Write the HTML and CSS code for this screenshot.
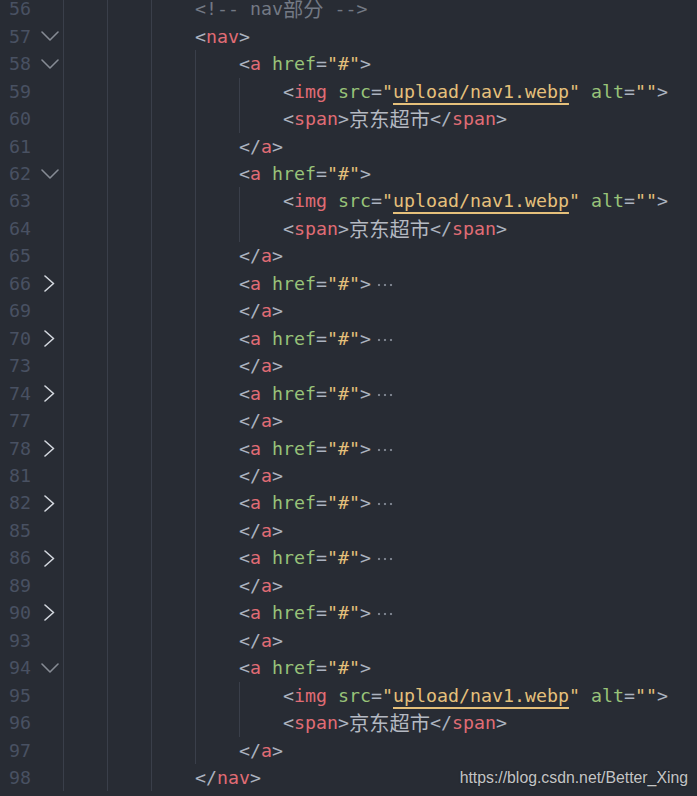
FILE: index.html
```html
<!DOCTYPE html>
<html lang="zh">
<head>
<meta charset="utf-8">
<title>nav</title>
<link rel="stylesheet" href="styles.css">
</head>
<body>
<div class="editor">
  <div class="lines">
    <div class="row first"><span class="ln">56</span><span class="fold"></span><div class="code"><i class="ind"></i><i class="ind"></i><i class="ind"></i><span class="txt c-com">&lt;!-- nav<span class="cjk">部分</span> --&gt;</span></div></div>
    <div class="row"><span class="ln">57</span><span class="fold"><svg class="chev-d" width="18" height="10" viewBox="0 0 18 10"><polyline points="1,1 9,9 17,1"/></svg></span><div class="code"><i class="ind"></i><i class="ind"></i><i class="ind"></i><span class="txt"><b class="p">&lt;</b><b class="t">nav</b><b class="p">&gt;</b></span></div></div>
    <div class="row"><span class="ln">58</span><span class="fold"><svg class="chev-d" width="18" height="10" viewBox="0 0 18 10"><polyline points="1,1 9,9 17,1"/></svg></span><div class="code"><i class="ind"></i><i class="ind"></i><i class="ind"></i><i class="ind"></i><span class="txt"><b class="p">&lt;</b><b class="t">a</b> <b class="a">href</b><b class="p">=</b><b class="s">"#"</b><b class="p">&gt;</b></span></div></div>
    <div class="row"><span class="ln">59</span><span class="fold"></span><div class="code"><i class="ind"></i><i class="ind"></i><i class="ind"></i><i class="ind"></i><i class="ind"></i><span class="txt"><b class="p">&lt;</b><b class="t">img</b> <b class="a">src</b><b class="p">=</b><b class="s">"<u class="link">upload/nav1.webp</u>"</b> <b class="a">alt</b><b class="p">=</b><b class="s">""</b><b class="p">&gt;</b></span></div></div>
    <div class="row"><span class="ln">60</span><span class="fold"></span><div class="code"><i class="ind"></i><i class="ind"></i><i class="ind"></i><i class="ind"></i><i class="ind"></i><span class="txt"><b class="p">&lt;</b><b class="t">span</b><b class="p">&gt;</b><span class="cjk">京东超市</span><b class="p">&lt;/</b><b class="t">span</b><b class="p">&gt;</b></span></div></div>
    <div class="row"><span class="ln">61</span><span class="fold"></span><div class="code"><i class="ind"></i><i class="ind"></i><i class="ind"></i><i class="ind"></i><span class="txt"><b class="p">&lt;/</b><b class="t">a</b><b class="p">&gt;</b></span></div></div>
    <div class="row"><span class="ln">62</span><span class="fold"><svg class="chev-d" width="18" height="10" viewBox="0 0 18 10"><polyline points="1,1 9,9 17,1"/></svg></span><div class="code"><i class="ind"></i><i class="ind"></i><i class="ind"></i><i class="ind"></i><span class="txt"><b class="p">&lt;</b><b class="t">a</b> <b class="a">href</b><b class="p">=</b><b class="s">"#"</b><b class="p">&gt;</b></span></div></div>
    <div class="row"><span class="ln">63</span><span class="fold"></span><div class="code"><i class="ind"></i><i class="ind"></i><i class="ind"></i><i class="ind"></i><i class="ind"></i><span class="txt"><b class="p">&lt;</b><b class="t">img</b> <b class="a">src</b><b class="p">=</b><b class="s">"<u class="link">upload/nav1.webp</u>"</b> <b class="a">alt</b><b class="p">=</b><b class="s">""</b><b class="p">&gt;</b></span></div></div>
    <div class="row"><span class="ln">64</span><span class="fold"></span><div class="code"><i class="ind"></i><i class="ind"></i><i class="ind"></i><i class="ind"></i><i class="ind"></i><span class="txt"><b class="p">&lt;</b><b class="t">span</b><b class="p">&gt;</b><span class="cjk">京东超市</span><b class="p">&lt;/</b><b class="t">span</b><b class="p">&gt;</b></span></div></div>
    <div class="row"><span class="ln">65</span><span class="fold"></span><div class="code"><i class="ind"></i><i class="ind"></i><i class="ind"></i><i class="ind"></i><span class="txt"><b class="p">&lt;/</b><b class="t">a</b><b class="p">&gt;</b></span></div></div>
    <div class="row"><span class="ln">66</span><span class="fold"><svg class="chev-r" width="11" height="17" viewBox="0 0 11 17"><polyline points="1,1 9.5,8.5 1,16"/></svg></span><div class="code"><i class="ind"></i><i class="ind"></i><i class="ind"></i><i class="ind"></i><span class="txt"><b class="p">&lt;</b><b class="t">a</b> <b class="a">href</b><b class="p">=</b><b class="s">"#"</b><b class="p">&gt;</b><span class="more"></span></span></div></div>
    <div class="row"><span class="ln">69</span><span class="fold"></span><div class="code"><i class="ind"></i><i class="ind"></i><i class="ind"></i><i class="ind"></i><span class="txt"><b class="p">&lt;/</b><b class="t">a</b><b class="p">&gt;</b></span></div></div>
    <div class="row"><span class="ln">70</span><span class="fold"><svg class="chev-r" width="11" height="17" viewBox="0 0 11 17"><polyline points="1,1 9.5,8.5 1,16"/></svg></span><div class="code"><i class="ind"></i><i class="ind"></i><i class="ind"></i><i class="ind"></i><span class="txt"><b class="p">&lt;</b><b class="t">a</b> <b class="a">href</b><b class="p">=</b><b class="s">"#"</b><b class="p">&gt;</b><span class="more"></span></span></div></div>
    <div class="row"><span class="ln">73</span><span class="fold"></span><div class="code"><i class="ind"></i><i class="ind"></i><i class="ind"></i><i class="ind"></i><span class="txt"><b class="p">&lt;/</b><b class="t">a</b><b class="p">&gt;</b></span></div></div>
    <div class="row"><span class="ln">74</span><span class="fold"><svg class="chev-r" width="11" height="17" viewBox="0 0 11 17"><polyline points="1,1 9.5,8.5 1,16"/></svg></span><div class="code"><i class="ind"></i><i class="ind"></i><i class="ind"></i><i class="ind"></i><span class="txt"><b class="p">&lt;</b><b class="t">a</b> <b class="a">href</b><b class="p">=</b><b class="s">"#"</b><b class="p">&gt;</b><span class="more"></span></span></div></div>
    <div class="row"><span class="ln">77</span><span class="fold"></span><div class="code"><i class="ind"></i><i class="ind"></i><i class="ind"></i><i class="ind"></i><span class="txt"><b class="p">&lt;/</b><b class="t">a</b><b class="p">&gt;</b></span></div></div>
    <div class="row"><span class="ln">78</span><span class="fold"><svg class="chev-r" width="11" height="17" viewBox="0 0 11 17"><polyline points="1,1 9.5,8.5 1,16"/></svg></span><div class="code"><i class="ind"></i><i class="ind"></i><i class="ind"></i><i class="ind"></i><span class="txt"><b class="p">&lt;</b><b class="t">a</b> <b class="a">href</b><b class="p">=</b><b class="s">"#"</b><b class="p">&gt;</b><span class="more"></span></span></div></div>
    <div class="row"><span class="ln">81</span><span class="fold"></span><div class="code"><i class="ind"></i><i class="ind"></i><i class="ind"></i><i class="ind"></i><span class="txt"><b class="p">&lt;/</b><b class="t">a</b><b class="p">&gt;</b></span></div></div>
    <div class="row"><span class="ln">82</span><span class="fold"><svg class="chev-r" width="11" height="17" viewBox="0 0 11 17"><polyline points="1,1 9.5,8.5 1,16"/></svg></span><div class="code"><i class="ind"></i><i class="ind"></i><i class="ind"></i><i class="ind"></i><span class="txt"><b class="p">&lt;</b><b class="t">a</b> <b class="a">href</b><b class="p">=</b><b class="s">"#"</b><b class="p">&gt;</b><span class="more"></span></span></div></div>
    <div class="row"><span class="ln">85</span><span class="fold"></span><div class="code"><i class="ind"></i><i class="ind"></i><i class="ind"></i><i class="ind"></i><span class="txt"><b class="p">&lt;/</b><b class="t">a</b><b class="p">&gt;</b></span></div></div>
    <div class="row"><span class="ln">86</span><span class="fold"><svg class="chev-r" width="11" height="17" viewBox="0 0 11 17"><polyline points="1,1 9.5,8.5 1,16"/></svg></span><div class="code"><i class="ind"></i><i class="ind"></i><i class="ind"></i><i class="ind"></i><span class="txt"><b class="p">&lt;</b><b class="t">a</b> <b class="a">href</b><b class="p">=</b><b class="s">"#"</b><b class="p">&gt;</b><span class="more"></span></span></div></div>
    <div class="row"><span class="ln">89</span><span class="fold"></span><div class="code"><i class="ind"></i><i class="ind"></i><i class="ind"></i><i class="ind"></i><span class="txt"><b class="p">&lt;/</b><b class="t">a</b><b class="p">&gt;</b></span></div></div>
    <div class="row"><span class="ln">90</span><span class="fold"><svg class="chev-r" width="11" height="17" viewBox="0 0 11 17"><polyline points="1,1 9.5,8.5 1,16"/></svg></span><div class="code"><i class="ind"></i><i class="ind"></i><i class="ind"></i><i class="ind"></i><span class="txt"><b class="p">&lt;</b><b class="t">a</b> <b class="a">href</b><b class="p">=</b><b class="s">"#"</b><b class="p">&gt;</b><span class="more"></span></span></div></div>
    <div class="row"><span class="ln">93</span><span class="fold"></span><div class="code"><i class="ind"></i><i class="ind"></i><i class="ind"></i><i class="ind"></i><span class="txt"><b class="p">&lt;/</b><b class="t">a</b><b class="p">&gt;</b></span></div></div>
    <div class="row"><span class="ln">94</span><span class="fold"><svg class="chev-d" width="18" height="10" viewBox="0 0 18 10"><polyline points="1,1 9,9 17,1"/></svg></span><div class="code"><i class="ind"></i><i class="ind"></i><i class="ind"></i><i class="ind"></i><span class="txt"><b class="p">&lt;</b><b class="t">a</b> <b class="a">href</b><b class="p">=</b><b class="s">"#"</b><b class="p">&gt;</b></span></div></div>
    <div class="row"><span class="ln">95</span><span class="fold"></span><div class="code"><i class="ind"></i><i class="ind"></i><i class="ind"></i><i class="ind"></i><i class="ind"></i><span class="txt"><b class="p">&lt;</b><b class="t">img</b> <b class="a">src</b><b class="p">=</b><b class="s">"<u class="link">upload/nav1.webp</u>"</b> <b class="a">alt</b><b class="p">=</b><b class="s">""</b><b class="p">&gt;</b></span></div></div>
    <div class="row"><span class="ln">96</span><span class="fold"></span><div class="code"><i class="ind"></i><i class="ind"></i><i class="ind"></i><i class="ind"></i><i class="ind"></i><span class="txt"><b class="p">&lt;</b><b class="t">span</b><b class="p">&gt;</b><span class="cjk">京东超市</span><b class="p">&lt;/</b><b class="t">span</b><b class="p">&gt;</b></span></div></div>
    <div class="row"><span class="ln">97</span><span class="fold"></span><div class="code"><i class="ind"></i><i class="ind"></i><i class="ind"></i><i class="ind"></i><span class="txt"><b class="p">&lt;/</b><b class="t">a</b><b class="p">&gt;</b></span></div></div>
    <div class="row"><span class="ln">98</span><span class="fold"></span><div class="code"><i class="ind"></i><i class="ind"></i><i class="ind"></i><span class="txt"><b class="p">&lt;/</b><b class="t">nav</b><b class="p">&gt;</b></span></div></div>
  </div>
  <div class="watermark">https://blog.csdn.net/Better_Xing</div>
</div>
</body>
</html>
```

FILE: styles.css
```css
html, body {
  margin: 0;
  padding: 0;
  background: #282c34;
}

body {
  width: 697px;
  height: 796px;
  overflow: hidden;
}

.editor {
  position: relative;
  width: 697px;
  height: 796px;
  overflow: hidden;
  background: #282c34;
  font-family: "DejaVu Sans Mono", "Liberation Mono", monospace;
  font-size: 18.27px;
  color: #abb2bf;
}

.lines {
  display: flex;
  flex-direction: column;
}

.row {
  display: flex;
  align-items: stretch;
  height: 27.46px;
  line-height: 27.46px;
  white-space: pre;
}

.row.first {
  height: 22.76px;
  line-height: 18px;
}

.row.first .cjk {
  line-height: 18px;
}

.ln {
  flex: none;
  width: 31px;
  text-align: right;
  color: #495162;
}

.fold {
  flex: none;
  width: 32px;
  display: flex;
  align-items: center;
}

.fold svg {
  display: block;
  fill: none;
  stroke-width: 1.6;
  stroke-linecap: round;
  stroke-linejoin: round;
}

.chev-d {
  margin-left: 9.5px;
  stroke: #868b94;
}

.chev-r {
  margin-left: 13px;
  stroke: #d3d7de;
}

.code {
  flex: 1;
  display: flex;
  align-items: stretch;
}

.ind {
  flex: none;
  width: 43px;
  border-left: 1px solid #3a3f4a;
}

.txt {
  flex: none;
}

.txt b, .txt u {
  font-weight: normal;
}

.p { color: #abb2bf; }
.t { color: #e06c75; }
.a { color: #98c379; }
.s { color: #e5c07b; }

.c-com { color: #737984; }

.link {
  text-decoration: underline;
  text-decoration-color: #e5c07b;
  text-decoration-thickness: 2px;
  text-underline-offset: 5px;
}

.cjk {
  font-family: "Noto Sans CJK SC", sans-serif;
  font-size: 20.25px;
  line-height: 27.46px;
  color: #b4b9c2;
  vertical-align: top;
}

.c-com .cjk {
  color: #737984;
}

.more {
  display: inline-block;
  width: 17px;
  height: 4px;
  margin-left: 5px;
  vertical-align: middle;
  background: radial-gradient(circle, #7a808b 1.1px, transparent 1.6px) 0 0 / 6px 4px repeat-x;
}

.watermark {
  position: absolute;
  right: 9px;
  bottom: 9px;
  font-family: "Liberation Sans", Arial, sans-serif;
  font-size: 15.8px;
  line-height: 18px;
  color: rgba(235, 235, 235, 0.82);
  text-shadow: 0 0 2px rgba(0, 0, 0, 0.4);
  white-space: nowrap;
}
```
